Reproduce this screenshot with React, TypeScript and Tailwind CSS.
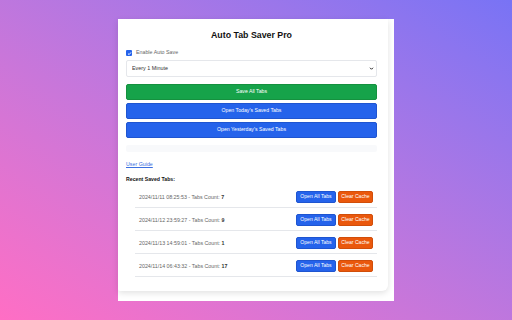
import React from "react";

type Saved = { date: string; time: string; count: number };

const SAVED: Saved[] = [
  { date: "2024/11/11", time: "08:25:53", count: 7 },
  { date: "2024/11/12", time: "23:59:27", count: 9 },
  { date: "2024/11/13", time: "14:59:01", count: 1 },
  { date: "2024/11/14", time: "06:43:32", count: 17 },
];

function Check() {
  return (
    <span className="grid place-items-center w-[6px] h-[6px] rounded-[1px] bg-[#2563eb]">
      <svg viewBox="0 0 10 10" className="w-[5px] h-[5px]">
        <path d="M2 5.2 L4.2 7.3 L8 2.8" fill="none" stroke="white" strokeWidth="1.8" />
      </svg>
    </span>
  );
}

export default function App() {
  return (
    <div
      className="flex items-center justify-center w-full h-screen bg-linear-to-tr from-[#ff6ec4] to-[#7873f5]"
      style={{ fontFamily: '"Liberation Sans", Arial, sans-serif' }}
    >
      <div className="w-[276px] h-[282px] bg-white">
        <div className="w-[270px] h-[272px] bg-white rounded-br-[6px] rounded-bl-[2px] shadow-[0_2px_6px_rgba(0,0,0,0.12)] pt-[11px] pl-[8px] pr-[11px]">
          <h1 className="text-center text-[8.8px] leading-[11px] font-bold text-[#111]">Auto Tab Saver Pro</h1>

          <label className="mt-[8px] flex items-center gap-[4px] h-[8px]">
            <Check />
            <span className="text-[5.3px] text-[#666]">Enable Auto Save</span>
          </label>

          <div className="relative mt-[3px] h-[17px]">
            <select className="block appearance-none w-full h-[17px] border border-[#e5e7eb] rounded-[2px] bg-white pl-[5px] text-[5.4px] text-[#333] outline-none">
              <option>Every 1 Minute</option>
            </select>
            <svg viewBox="0 0 10 10" className="absolute right-[3px] top-[6px] w-[5px] h-[5px]">
              <path d="M2 3.5 L5 6.5 L8 3.5" fill="none" stroke="#111" strokeWidth="1.8" />
            </svg>
          </div>

          <div className="mt-[7px] flex flex-col gap-[3px]">
            <button className="h-[16px] rounded-[2px] bg-[#16a34a] border border-[#15913f] text-white text-[5.2px]">Save All Tabs</button>
            <button className="h-[16px] rounded-[2px] bg-[#2563eb] border border-[#1f55d0] text-white text-[5.2px]">Open Today's Saved Tabs</button>
            <button className="h-[16px] rounded-[2px] bg-[#2563eb] border border-[#1f55d0] text-white text-[5.2px]">Open Yesterday's Saved Tabs</button>
          </div>

          <div className="mt-[7px] h-[7px] rounded-[2px] bg-[#f8f9fb]" />

          <a href="#" className="mt-[8px] block w-fit text-[5.3px] leading-[8px] text-[#3b6fe0] underline">User Guide</a>

          <h2 className="mt-[7px] text-[5.2px] leading-[8px] font-bold text-[#111]">Recent Saved Tabs:</h2>

          <ul className="mt-[4px] pl-[9px] flex flex-col gap-[2px]">
            {SAVED.map((s) => (
              <li key={s.date} className="flex items-center justify-between h-[21px] pl-[4px] pr-[4px] border-b border-[#e5e7eb]">
                <span className="text-[5.3px] leading-[8px] text-[#666]">
                  {s.date} {s.time} - Tabs Count: <b className="text-[#333]">{s.count}</b>
                </span>
                <span className="flex gap-[2px]">
                  <button className="h-[12px] w-[40px] rounded-[2px] bg-[#2563eb] border border-[#1f55d0] text-white text-[5.1px]">Open All Tabs</button>
                  <button className="h-[12px] w-[35px] rounded-[2px] bg-[#ea580c] border border-[#d14e0a] text-white text-[5.1px]">Clear Cache</button>
                </span>
              </li>
            ))}
          </ul>
        </div>
      </div>
    </div>
  );
}
